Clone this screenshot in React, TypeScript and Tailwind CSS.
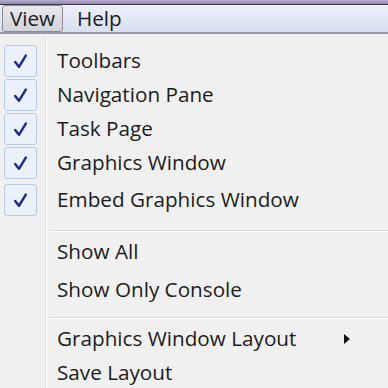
import React from "react";

const Check = () => (
  <svg width="17" height="17" viewBox="0 0 16 16">
    <path d="M3 8.5 L6.5 13 L13 2.5" fill="none" stroke="#1d2a8a" strokeWidth="2.3" strokeLinecap="round" strokeLinejoin="round" />
  </svg>
);

function Row({ label, checked, arrow, h = "h-[34px]" }: { label: string; checked?: boolean; arrow?: boolean; h?: string }) {
  return (
    <div className={`flex items-center ${h}`}>
      <div className="w-[46px] h-full flex items-center justify-start pl-[4px]">
        {checked && (
          <div className="w-[33px] h-[32px] rounded-[3px] border border-[#b5cbe6] bg-[#eaf1fa] flex items-center justify-center">
            <Check />
          </div>
        )}
      </div>
      <div className="flex-1 pl-[11px] text-[20.7px] text-[#1c1c1c]">{label}</div>
      {arrow && (
        <div className="pr-[38px]">
          <svg width="6" height="10" viewBox="0 0 6 10"><path d="M0 0 L6 5 L0 10 Z" fill="#111" /></svg>
        </div>
      )}
    </div>
  );
}

function Sep({ pt, pb }: { pt: string; pb: string }) {
  return (
    <div className={`flex ${pt} ${pb}`}>
      <div className="w-[50px]" />
      <div className="flex-1 flex flex-col">
        <div className="h-px bg-[#dadada]" />
        <div className="h-px bg-white" />
      </div>
    </div>
  );
}

export default function App() {
  return (
    <div className="w-[388px] h-[388px] overflow-hidden bg-[#f0f0f0] relative" style={{ fontFamily: '"Open Sans", "Noto Sans", sans-serif' }}>
      <div className="h-[4px] bg-gradient-to-b from-[#b8acd0] to-[#8f86a8]" />
      <div className="h-px bg-[#3c3850]" />
      <div className="h-[27px] bg-gradient-to-b from-[#eef0f8] to-[#d9dff2] flex items-center text-[20.7px] text-[#1c1c1c]">
        <div className="ml-[2px] h-[27px] w-[61px] flex items-center justify-center rounded-[3px] border border-[#8a8a94] bg-gradient-to-b from-[#e8e8ec] to-[#d2d4dc]">View</div>
        <div className="ml-[14px]">Help</div>
      </div>
      <div className="h-[2px] bg-[#9c9aa8]" />
      <div className="absolute left-[45px] top-[34px] bottom-0 w-px bg-[#e2e3e3]" />
      <div className="absolute left-[46px] top-[34px] bottom-0 w-px bg-white" />
      <div className="pt-[10px] relative">
        <Row label="Toolbars" checked />
        <Row label="Navigation Pane" checked />
        <Row label="Task Page" checked />
        <Row label="Graphics Window" checked />
        <Row label="Embed Graphics Window" checked h="h-[40px]" />
        <Sep pt="pt-[10px]" pb="pb-[1px]" />
        <Row label="Show All" h="h-[38px]" />
        <Row label="Show Only Console" h="h-[38px]" />
        <Sep pt="pt-[8px]" pb="pb-[3px]" />
        <Row label="Graphics Window Layout" arrow />
        <Row label="Save Layout" />
      </div>
    </div>
  );
}
